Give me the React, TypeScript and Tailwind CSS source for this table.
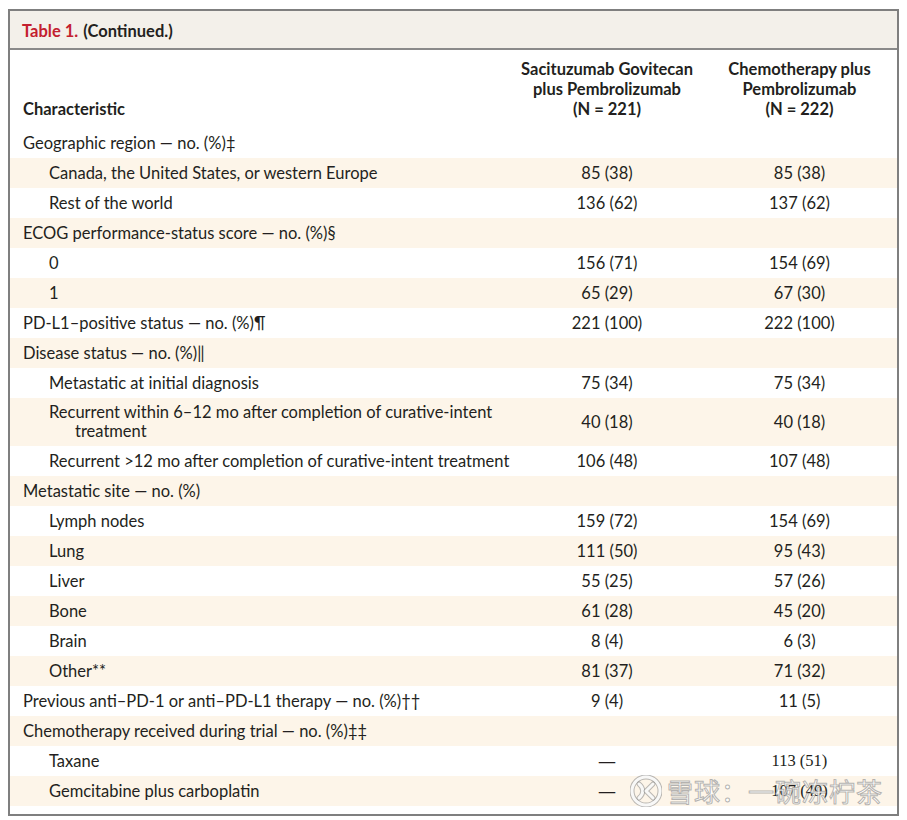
import React from 'react';

type Row = {
  label: React.ReactNode;
  a?: string;
  b?: string;
  indent?: boolean;
  tall?: boolean;
  serifB?: boolean;
};

const ROWS: Row[] = [
  { label: <>Geographic region — no. (%)‡</> },
  { label: 'Canada, the United States, or western Europe', a: '85 (38)', b: '85 (38)', indent: true },
  { label: 'Rest of the world', a: '136 (62)', b: '137 (62)', indent: true },
  { label: <>ECOG performance-status score — no. (%)§</> },
  { label: '0', a: '156 (71)', b: '154 (69)', indent: true },
  { label: '1', a: '65 (29)', b: '67 (30)', indent: true },
  { label: <>PD-L1–positive status — no. (%)¶</>, a: '221 (100)', b: '222 (100)' },
  { label: <>Disease status — no. (%)‖</> },
  { label: 'Metastatic at initial diagnosis', a: '75 (34)', b: '75 (34)', indent: true },
  {
    label: 'Recurrent within 6–12 mo after completion of curative-intent treatment',
    a: '40 (18)',
    b: '40 (18)',
    indent: true,
    tall: true,
  },
  { label: 'Recurrent >12 mo after completion of curative-intent treatment', a: '106 (48)', b: '107 (48)', indent: true },
  { label: 'Metastatic site — no. (%)' },
  { label: 'Lymph nodes', a: '159 (72)', b: '154 (69)', indent: true },
  { label: 'Lung', a: '111 (50)', b: '95 (43)', indent: true },
  { label: 'Liver', a: '55 (25)', b: '57 (26)', indent: true },
  { label: 'Bone', a: '61 (28)', b: '45 (20)', indent: true },
  { label: 'Brain', a: '8 (4)', b: '6 (3)', indent: true },
  { label: 'Other**', a: '81 (37)', b: '71 (32)', indent: true },
  { label: <>Previous anti–PD-1 or anti–PD-L1 therapy — no. (%)††</>, a: '9 (4)', b: '11 (5)' },
  { label: <>Chemotherapy received during trial — no. (%)‡‡</> },
  { label: 'Taxane', a: '—', b: '113 (51)', indent: true, serifB: true },
  { label: 'Gemcitabine plus carboplatin', a: '—', b: '107 (49)', indent: true, serifB: true },
];

function XueqiuLogo() {
  return (
    <svg width="32" height="32" viewBox="0 0 32 32" fill="none">
      <circle cx="16" cy="16" r="14" stroke="rgba(140,140,140,0.6)" strokeWidth="5" />
      <circle cx="16" cy="16" r="14" stroke="rgba(255,255,255,0.9)" strokeWidth="3" />
      <path d="M9 9 C14 13, 14 19, 9 23" stroke="rgba(140,140,140,0.6)" strokeWidth="5" strokeLinecap="round" />
      <path d="M9 9 C14 13, 14 19, 9 23" stroke="rgba(255,255,255,0.9)" strokeWidth="3" strokeLinecap="round" />
      <path d="M23 9 L16 16 L23 23" stroke="rgba(140,140,140,0.6)" strokeWidth="5" strokeLinecap="round" strokeLinejoin="round" />
      <path d="M23 9 L16 16 L23 23" stroke="rgba(255,255,255,0.9)" strokeWidth="3" strokeLinecap="round" strokeLinejoin="round" />
    </svg>
  );
}

export default function App() {
  return (
    <div className="bg-white w-[907px] h-[820px] pl-[8px] pt-[9px] font-['Lato','Open_Sans',sans-serif] text-[16.5px] text-[#231f20]">
      <div className="relative w-[891px] border-2 border-[#7f7f7f]">
        {/* title bar */}
        <div className="h-[39px] bg-[#f3f0ea] border-b-2 border-[#8a8a8a] flex items-center pl-[12px] pt-[3px] font-bold">
          <span className="text-[#c3202f]">Table 1.</span>
          <span className="ml-[5px]">(Continued.)</span>
        </div>

        {/* column heads */}
        <div className="grid grid-cols-[500px_194px_1fr] h-[78px] font-bold leading-[20px]">
          <div className="flex items-end pl-[13px] pb-[9px]">Characteristic</div>
          <div className="flex flex-col items-center pt-[9px] text-center">
            <span>Sacituzumab Govitecan</span>
            <span>plus Pembrolizumab</span>
            <span>(N = 221)</span>
          </div>
          <div className="flex flex-col items-center pt-[9px] text-center pr-[2px]">
            <span>Chemotherapy plus</span>
            <span>Pembrolizumab</span>
            <span>(N = 222)</span>
          </div>
        </div>

        {/* body */}
        <div className="pb-[8px]">
          {ROWS.map((r, i) => (
            <div
              key={i}
              className={`grid grid-cols-[500px_194px_1fr] items-center ${r.tall ? 'h-[48px]' : 'h-[30px]'} ${
                i % 2 === 1 ? 'bg-[#fdf5e9]' : 'bg-white'
              }`}
            >
              {r.tall ? (
                <div className="pl-[65px] -indent-[26px] leading-[19px] pr-[8px]">{r.label}</div>
              ) : (
                <div className={r.indent ? 'pl-[39px] whitespace-nowrap' : 'pl-[13px] whitespace-nowrap'}>{r.label}</div>
              )}
              <div className={`text-center ${r.a === '—' ? "font-['Liberation_Sans',sans-serif]" : ''}`}>{r.a}</div>
              <div className={`text-center pr-[2px] ${r.serifB ? "font-['Liberation_Serif',serif]" : ''}`}>{r.b}</div>
            </div>
          ))}
        </div>

        {/* watermark */}
        <div className="absolute left-[620px] top-[764px] flex items-center gap-[5px] pointer-events-none select-none">
          <XueqiuLogo />
          <span className="font-['Noto_Sans_CJK_SC',sans-serif] text-[26px] leading-none tracking-[1px] text-white/85 [-webkit-text-stroke:1px_rgba(130,130,130,0.6)]">
            雪球：一碗冻柠茶
          </span>
        </div>
      </div>
    </div>
  );
}
